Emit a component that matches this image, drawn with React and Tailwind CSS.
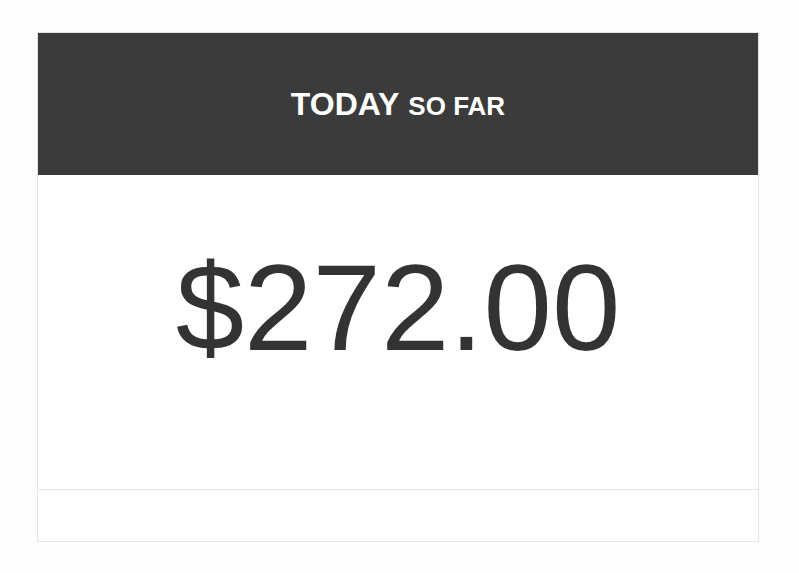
export default function App() {
  return (
    <div className="w-[799px] h-[573px] bg-[#fdfdfd] pt-[32px] pl-[37px]" style={{ fontFamily: '"Liberation Sans", Arial, sans-serif' }}>
      <div className="w-[722px] h-[510px] bg-white border border-[#e3e6e8] flex flex-col">
        <div className="h-[142px] bg-[#3b3b3b] flex items-center justify-center text-white font-bold">
          <div className="flex items-baseline">
            <span className="text-[32px] leading-none">TODAY</span>
            <span className="text-[26px] leading-none ml-[9px]">SO FAR</span>
          </div>
        </div>
        <div className="h-[315px] border-b border-[#e3e6e8] flex justify-center pt-[71px]">
          <div className="text-[123px] leading-[123px] text-[#333333] h-[123px]">$272.00</div>
        </div>
        <div className="flex-1" />
      </div>
    </div>
  );
}
